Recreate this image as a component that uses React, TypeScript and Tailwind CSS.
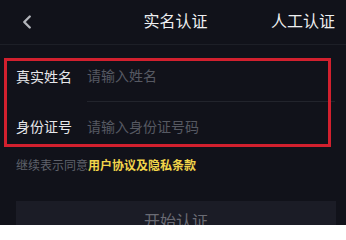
import { ChevronLeft } from "lucide-react";

const FONT = "font-['Liberation_Sans','Noto_Sans_CJK_SC',sans-serif]";

function Row({ label, placeholder, divider }: { label: string; placeholder: string; divider?: boolean }) {
  return (
    <div className="flex h-[50px] items-stretch pl-4 pr-[11px]">
      <div className="flex w-[71px] shrink-0 items-center text-[14px] text-[#e6e7ea]">{label}</div>
      <div className={`flex flex-1 items-center text-[14px] text-[#565962] ${divider ? "border-b border-[#22242c]" : ""}`}>
        {placeholder}
      </div>
    </div>
  );
}

export default function App() {
  return (
    <div className={`relative h-[225px] w-[346px] overflow-hidden bg-[#11121a] ${FONT}`}>
      {/* 顶部导航 */}
      <div className="grid h-[45px] grid-cols-[1fr_auto_1fr] items-center border-b border-[#1d1f27] pl-[16px] pr-[11px]">
        <ChevronLeft className="h-[22px] w-[22px] text-[#b3b5bb]" strokeWidth={2.6} />
        <span className="text-[16px] text-[#eeeff1]">实名认证</span>
        <span className="justify-self-end text-[16px] text-[#eeeff1]">人工认证</span>
      </div>

      <div className="mt-[7px]">
        <Row label="真实姓名" placeholder="请输入姓名" divider />
        <Row label="身份证号" placeholder="请输入身份证号码" />
      </div>

      <div className="mt-[4px] h-[20px] pl-4 text-[12px] leading-[20px] text-[#5f626b]">
        继续表示同意<span className="font-bold text-[#f1d54a]">用户协议及隐私条款</span>
      </div>

      <div className="ml-4 mr-[10px] mt-[25px] flex h-[42px] items-center justify-center bg-[#1b1c26] text-[16px] text-[#6a6b74]">
        开始认证
      </div>

      {/* 标注红框 */}
      <div className="pointer-events-none absolute left-[4px] top-[58px] h-[89px] w-[327px] border-[3px] border-[#d2202e]" />
    </div>
  );
}
